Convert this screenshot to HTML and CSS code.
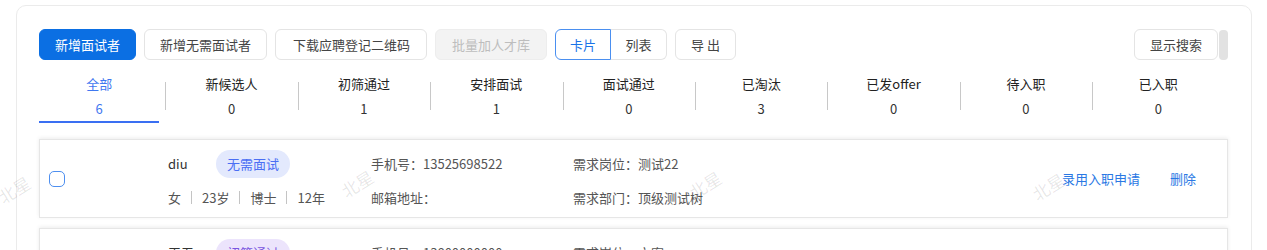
FILE: index.html
```html
<!DOCTYPE html>
<html lang="zh-CN">
<head>
    <meta charset="UTF-8">
    <meta name="viewport" content="width=device-width, initial-scale=1.0">
    <title>面试管理</title>
    <link rel="stylesheet" href="styles.css">
</head>
<body>
    <div class="panel">
        <!-- 工具栏 -->
        <div class="toolbar">
            <button class="btn btn-primary">新增面试者</button>
            <button class="btn">新增无需面试者</button>
            <button class="btn btn-wide">下载应聘登记二维码</button>
            <button class="btn btn-disabled">批量加人才库</button>
            <div class="segment">
                <button class="seg-item active">卡片</button>
                <button class="seg-item">列表</button>
            </div>
            <button class="btn">导 出</button>
            <div class="toolbar-right">
                <button class="btn">显示搜索</button>
                <span class="scroll-thumb"></span>
            </div>
        </div>

        <!-- 状态标签 -->
        <div class="tabs">
            <div class="tab active"><span class="tab-label">全部</span><span class="tab-num">6</span></div>
            <div class="tab"><span class="tab-label">新候选人</span><span class="tab-num">0</span></div>
            <div class="tab"><span class="tab-label">初筛通过</span><span class="tab-num">1</span></div>
            <div class="tab"><span class="tab-label">安排面试</span><span class="tab-num">1</span></div>
            <div class="tab"><span class="tab-label">面试通过</span><span class="tab-num">0</span></div>
            <div class="tab"><span class="tab-label">已淘汰</span><span class="tab-num">3</span></div>
            <div class="tab"><span class="tab-label">已发offer</span><span class="tab-num">0</span></div>
            <div class="tab"><span class="tab-label">待入职</span><span class="tab-num">0</span></div>
            <div class="tab"><span class="tab-label">已入职</span><span class="tab-num">0</span></div>
        </div>

        <!-- 候选人卡片 -->
        <div class="card-list">
            <div class="card">
                <span class="checkbox"></span>
                <div class="col col-person">
                    <div class="row">
                        <span class="name">diu</span>
                        <span class="tag">无需面试</span>
                    </div>
                    <div class="row meta">
                        <span>女</span><i class="sep"></i><span>23岁</span><i class="sep"></i><span>博士</span><i class="sep"></i><span>12年</span>
                    </div>
                </div>
                <div class="col col-contact">
                    <div class="row">手机号：13525698522</div>
                    <div class="row">邮箱地址：</div>
                </div>
                <div class="col col-job">
                    <div class="row">需求岗位：测试22</div>
                    <div class="row">需求部门：顶级测试树</div>
                </div>
                <div class="actions">
                    <a class="link">录用入职申请</a>
                    <a class="link">删除</a>
                </div>
            </div>
            <div class="card">
                <span class="checkbox"></span>
                <div class="col col-person">
                    <div class="row">
                        <span class="name">王五</span>
                        <span class="tag tag-purple">初筛通过</span>
                    </div>
                    <div class="row meta">
                        <span>男</span><i class="sep"></i><span>28岁</span><i class="sep"></i><span>本科</span><i class="sep"></i><span>5年</span>
                    </div>
                </div>
                <div class="col col-contact">
                    <div class="row">手机号：13800000000</div>
                    <div class="row">邮箱地址：</div>
                </div>
                <div class="col col-job">
                    <div class="row">需求岗位：文案</div>
                    <div class="row">需求部门：顶级测试树</div>
                </div>
                <div class="actions">
                    <a class="link">安排面试</a>
                    <a class="link">删除</a>
                </div>
            </div>
        </div>

        <!-- 水印 -->
        <span class="watermark wm-1">北星</span>
        <span class="watermark wm-2">北星</span>
        <span class="watermark wm-3">北星</span>
        <span class="watermark wm-4">北星</span>
    </div>
</body>
</html>
```

FILE: styles.css
```css
/* General */
body {
    margin: 0;
    padding: 5px 15px 0 16px;
    background-color: #fff;
    font-family: "Noto Sans CJK SC", "Noto Sans", sans-serif;
    font-size: 13px;
    color: #333;
}

/* Panel */
.panel {
    position: relative;
    border: 1px solid #ebebeb;
    border-radius: 10px;
    padding: 23px 23px 20px 22px;
    min-height: 400px;
}

/* Toolbar */
.toolbar {
    display: flex;
    align-items: center;
    gap: 8px;
}

.btn {
    height: 31px;
    padding: 0 15px;
    border: 1px solid #e4e4e4;
    border-radius: 6px;
    background-color: #fff;
    color: #444;
    font-family: inherit;
    font-size: 13px;
    cursor: pointer;
}

.btn-wide {
    padding: 0 16px 0 17px;
}

.btn-primary {
    background-color: #0b6fe3;
    border-color: #0b6fe3;
    color: #fff;
}

.btn-disabled {
    padding: 0 16px;
    background-color: #f3f3f3;
    border-color: #ededed;
    color: #bdbdbd;
    cursor: not-allowed;
}

.segment {
    display: flex;
}

.seg-item {
    height: 31px;
    width: 56px;
    border: 1px solid #e4e4e4;
    background-color: #fff;
    color: #444;
    font-family: inherit;
    font-size: 13px;
    padding: 0;
}

.seg-item:first-child {
    border-radius: 6px 0 0 6px;
}

.seg-item:last-child {
    border-left: none;
    border-radius: 0 6px 6px 0;
}

.seg-item.active {
    border-color: #4a8ff0;
    color: #1a73e8;
}

.toolbar-right {
    margin-left: auto;
    display: flex;
    align-items: center;
    gap: 1px;
}

.scroll-thumb {
    width: 9px;
    height: 30px;
    border-radius: 4px;
    background-color: #e2e2e2;
}

/* Tabs */
.tabs {
    display: flex;
    margin: 12px 0 0 -6px;
}

.tab {
    position: relative;
    width: 132.4px;
    flex: none;
    display: flex;
    flex-direction: column;
    align-items: center;
    padding-top: 2px;
    height: 49px;
    color: #222;
}

.tab + .tab::before {
    content: "";
    position: absolute;
    left: 0;
    top: 10px;
    height: 28px;
    border-left: 1px solid #c8c8c8;
}

.tab-label {
    line-height: 20px;
}

.tab-num {
    line-height: 20px;
    margin-top: 5px;
    color: #333;
}

.tab.active .tab-label,
.tab.active .tab-num {
    color: #3f78f0;
}

.tab.active::after {
    content: "";
    position: absolute;
    left: 6px;
    right: 6px;
    bottom: 0;
    height: 2px;
    background-color: #3a6ff2;
}

/* Cards */
.card-list {
    margin-top: 16px;
    display: flex;
    flex-direction: column;
    gap: 10px;
}

.card {
    display: flex;
    align-items: center;
    height: 79px;
    box-sizing: border-box;
    border: 1px solid #e6e6e6;
    box-shadow: 0 -1px 4px rgba(0, 0, 0, 0.08);
    padding: 0 31px 0 9px;
    color: #555;
}

.checkbox {
    width: 14px;
    height: 14px;
    border: 1px solid #4d8ff0;
    border-radius: 5px;
    margin-right: 103px;
    flex: none;
}

.col {
    display: flex;
    flex-direction: column;
    gap: 10px;
}

.row {
    display: flex;
    align-items: center;
    height: 20px;
}

.row:first-child {
    height: 28px;
}

.col-person {
    width: 203px;
}

.col-contact {
    width: 202px;
}

.name {
    width: 48px;
    color: #333;
}

.tag {
    height: 28px;
    line-height: 28px;
    padding: 0 11px;
    border-radius: 14px;
    background-color: #e3e9fd;
    color: #4a6ef4;
}

.tag-purple {
    background-color: #ece4fc;
    color: #7a55e0;
}

.meta .sep {
    width: 1px;
    height: 13px;
    background-color: #c4c4c4;
    margin: 0 10px;
}

.actions {
    margin-left: auto;
    display: flex;
    gap: 30px;
}

.link {
    color: #2a78e4;
    cursor: pointer;
}

/* Watermark */
.watermark {
    position: absolute;
    font-size: 17px;
    color: rgba(0, 0, 0, 0.1);
    transform: rotate(-32deg);
    pointer-events: none;
}

.wm-1 { left: -20px; top: 171px; }
.wm-2 { left: 323px; top: 165px; }
.wm-3 { left: 671px; top: 166px; }
.wm-4 { left: 1014px; top: 168px; }
```
